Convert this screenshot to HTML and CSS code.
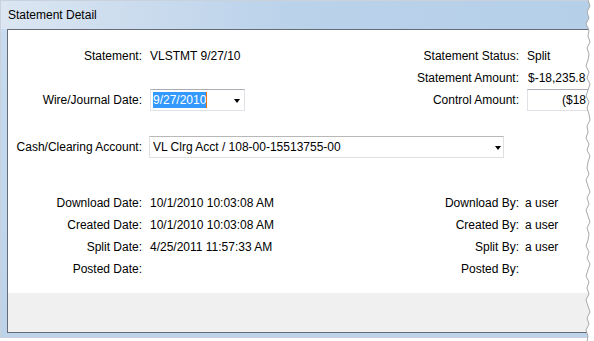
FILE: index.html
```html
<!DOCTYPE html>
<html lang="en">
<head>
	<meta charset="UTF-8">
	<title>Statement Detail</title>
	<link rel="stylesheet" href="styles.css">
</head>
<body>
	<div class="page">
		<div class="window">
			<div class="titlebar">Statement Detail</div>
			<div class="client">
				<div class="panel">
					<div class="grid top">
						<span class="lbl">Statement:</span><span class="val">VLSTMT 9/27/10</span>
						<span class="lbl">Statement Status:</span><span class="val">Split</span>

						<span></span><span></span>
						<span class="lbl">Statement Amount:</span><span class="val amt">$-18,235.8</span>

						<span class="lbl">Wire/Journal Date:</span>
						<span class="val">
							<div class="combo date">
								<span class="text"><span class="sel">9/27/2010</span><span class="caret"></span></span>
								<span class="arrow"></span>
							</div>
						</span>
						<span class="lbl">Control Amount:</span>
						<span class="val"><div class="textbox amount">($18</div></span>
					</div>

					<div class="grid account">
						<span class="lbl">Cash/Clearing Account:</span>
						<span class="val">
							<div class="combo select">
								<span class="text">VL Clrg Acct / 108-00-15513755-00</span>
								<span class="arrow"></span>
							</div>
						</span>
					</div>

					<div class="grid bottom">
						<span class="lbl">Download Date:</span><span class="val">10/1/2010 10:03:08 AM</span>
						<span class="lbl">Download By:</span><span class="val">a user</span>

						<span class="lbl">Created Date:</span><span class="val">10/1/2010 10:03:08 AM</span>
						<span class="lbl">Created By:</span><span class="val">a user</span>

						<span class="lbl">Split Date:</span><span class="val">4/25/2011 11:57:33 AM</span>
						<span class="lbl">Split By:</span><span class="val">a user</span>

						<span class="lbl">Posted Date:</span><span class="val"></span>
						<span class="lbl">Posted By:</span><span class="val"></span>
					</div>
				</div>
				<div class="footer"></div>
			</div>
		</div>

		<!-- torn right edge of the screenshot -->
		<svg class="tear" width="11" height="341" viewBox="0 0 11 341">
			<polygon fill="#fff" points="11,0 5,0 7,6 4,12 6,18 3,24 6,30 5,36 7,42 4,48 6,54 5,60 3,66 6,72 4,78 7,84 5,90 3,96 6,102 4,108 6,114 7,120 4,126 5,132 3,138 6,144 4,150 7,156 5,162 4,168 6,174 3,180 5,186 7,192 4,198 6,204 3,210 5,216 7,222 4,228 6,234 5,240 3,246 6,252 4,258 7,264 5,270 3,276 6,282 4,288 6,294 3,300 5,306 7,312 4,318 6,324 3,330 5,336 4,342 11,342"/>
			<polyline fill="none" stroke="#a9a9a9" stroke-width="1" points="5,0 7,6 4,12 6,18 3,24 6,30 5,36 7,42 4,48 6,54 5,60 3,66 6,72 4,78 7,84 5,90 3,96 6,102 4,108 6,114 7,120 4,126 5,132 3,138 6,144 4,150 7,156 5,162 4,168 6,174 3,180 5,186 7,192 4,198 6,204 3,210 5,216 7,222 4,228 6,234 5,240 3,246 6,252 4,258 7,264 5,270 3,276 6,282 4,288 6,294 3,300 5,306 7,312 4,318 6,324 3,330 5,336 4,342"/>
		</svg>
	</div>
</body>
</html>
```

FILE: styles.css
```css
html, body {
	margin: 0;
	padding: 0;
	background: #fff;
	overflow: hidden;
}
body {
	font-family: "Liberation Sans", Arial, sans-serif;
	font-size: 12px;
	color: #000;
}
.page {
	position: relative;
	width: 594px;
	height: 341px;
	overflow: hidden;
}
.window {
	width: 640px;
	height: 338px;
	box-sizing: border-box;
	border: 1px solid #c9d2dc;
	padding: 0 0 4px 6px;
	background: linear-gradient(to bottom, #c9dcef, #bcd3ea);
}
.titlebar {
	height: 28px;
	margin-left: -6px;
	padding-left: 7px;
	line-height: 29px;
	background: linear-gradient(to right, #dbe6f2 0%, #ccdcee 20%, #bad2ea 45%, #b5cfe8 100%);
	color: #000;
}
.client {
	border: 1px solid #646b76;
	background: #fff;
}
.panel {
	height: 263px;
	padding-top: 15px;
	box-sizing: border-box;
}
.footer {
	height: 39px;
	background: #f0f0f0;
}

.grid {
	display: grid;
	grid-template-columns: 134px 250px 111px auto;
	grid-auto-rows: 22px;
	column-gap: 8px;
	align-items: center;
	white-space: nowrap;
}
.grid.account {
	margin-top: 25px;
}
.grid.bottom {
	margin-top: 34px;
}
.lbl {
	text-align: right;
}
.val.amt {
	margin-left: 1px;
}
.bottom .val:nth-child(4n) {
	margin-left: -2px;
}

.combo, .textbox {
	box-sizing: border-box;
	height: 22px;
	border: 1px solid #dfe3e8;
	border-top-color: #abadb3;
	background: #fff;
	display: flex;
	align-items: center;
}
.combo {
	justify-content: space-between;
	padding: 0 4px 0 2px;
}
.combo.date {
	width: 95px;
}
.combo.select {
	width: 355px;
	margin-left: -1px;
	padding-left: 3px;
	padding-right: 2px;
	border-color: #e0e0e0;
	border-top-color: #b8b8b8;
}
.text {
	display: flex;
	align-items: center;
}
.sel {
	background: #3399ff;
	color: #fff;
	height: 16px;
	line-height: 16px;
}
.caret {
	width: 1px;
	height: 16px;
	background: #e8741a;
}
.arrow {
	width: 0;
	height: 0;
	border-left: 3.5px solid transparent;
	border-right: 3.5px solid transparent;
	border-top: 4px solid #000;
	margin-top: 1px;
}
.textbox.amount {
	width: 90px;
	padding-left: 34px;
}

.tear {
	position: absolute;
	top: 0;
	left: 583px;
}
```
